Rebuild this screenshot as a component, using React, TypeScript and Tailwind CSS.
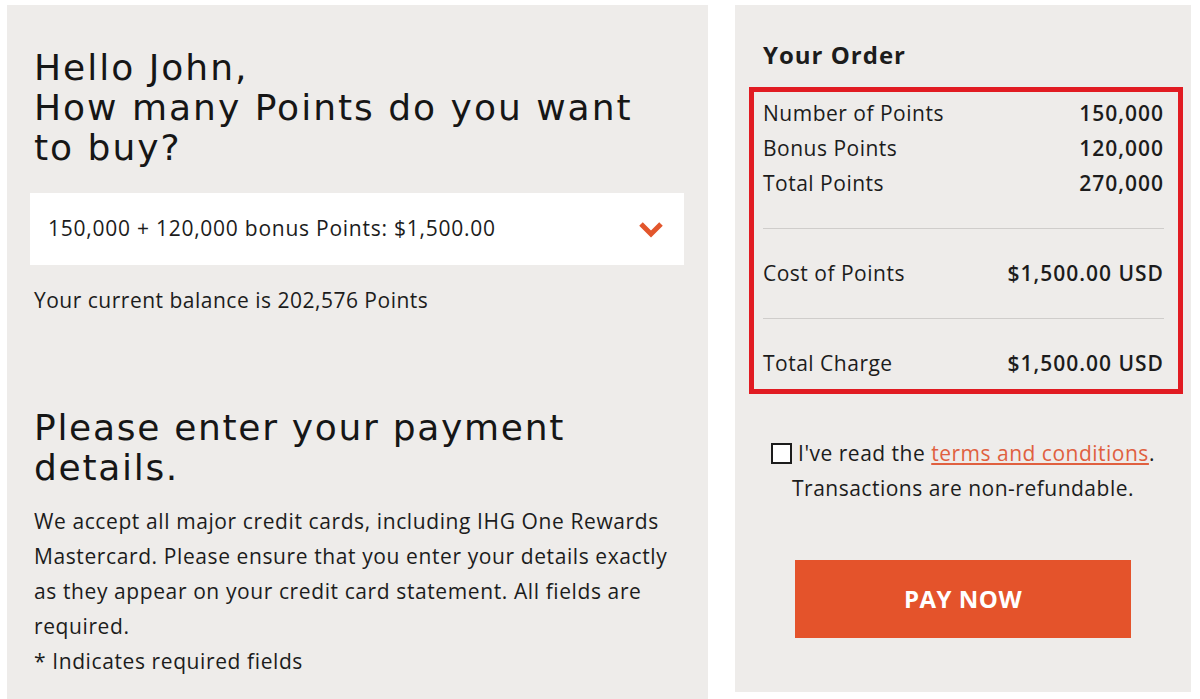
import React from "react";

const heading = { fontFamily: '"DejaVu Sans", sans-serif' };
const body = { fontFamily: '"Open Sans", sans-serif' };

function Row({ label, value }: { label: string; value: string }) {
  return (
    <div className="flex justify-between items-center h-[35px]">
      <span>{label}</span>
      <span className="font-semibold tracking-[1px]">{value}</span>
    </div>
  );
}

export default function App() {
  return (
    <div className="w-[1200px] h-[699px] bg-white flex text-[#1c1c1c] overflow-hidden tracking-[0.5px]" style={body}>
      <div className="ml-[7px] mt-[5px] w-[701px] h-[694px] bg-[#eeecea] pl-[23px] pr-[24px] pt-[43px]">
        <h1 className="pl-[4px] text-[36px] leading-[40px] font-normal tracking-[2px] text-[#161616]" style={heading}>
          Hello John,
          <br />
          How many Points do you want to buy?
        </h1>
        <div className="mt-[25px] h-[72px] bg-white flex items-center justify-between pl-[18px] pr-[20px] text-[21px] tracking-[0.75px]">
          <span>150,000 + 120,000 bonus Points: $1,500.00</span>
          <svg width="26" height="18" viewBox="0 0 26 18">
            <path d="M3 4 L13 14 L23 4" fill="none" stroke="#e2562c" strokeWidth="5" strokeLinecap="butt" strokeLinejoin="miter" />
          </svg>
        </div>
        <p className="pl-[4px] mt-[20px] text-[21px] leading-[30px]">Your current balance is 202,576 Points</p>
        <h2 className="pl-[4px] mt-[93px] text-[36px] leading-[40px] font-normal tracking-[1.7px] text-[#161616]" style={heading}>
          Please enter your payment details.
        </h2>
        <p className="pl-[4px] mt-[16px] text-[21px] leading-[35px] tracking-[0.6px]">
          We accept all major credit cards, including IHG One Rewards Mastercard. Please ensure that you enter your details exactly as they appear on your credit card statement. All fields are required.
        </p>
        <p className="pl-[4px] text-[21px] leading-[35px] tracking-[0.6px]">* Indicates required fields</p>
      </div>

      <div className="ml-[27px] mt-[5px] w-[456px] h-[687px] bg-[#eeecea] pt-[35px] pl-[14px] pr-[8px]">
        <h3 className="pl-[14px] text-[24px] leading-[30px] font-bold tracking-[1px]">Your Order</h3>
        <div className="mt-[17px] border-[5px] border-[#e11b22] pl-[9px] pr-[14px] pt-[4px] pb-[8px] text-[21px]">
          <Row label="Number of Points" value="150,000" />
          <Row label="Bonus Points" value="120,000" />
          <Row label="Total Points" value="270,000" />
          <div className="h-px bg-[#cfcdcb] mt-[27px]" />
          <div className="pt-[27px]">
            <Row label="Cost of Points" value="$1,500.00 USD" />
          </div>
          <div className="h-px bg-[#cfcdcb] mt-[27px]" />
          <div className="pt-[27px]">
            <Row label="Total Charge" value="$1,500.00 USD" />
          </div>
        </div>
        <div className="mt-[42px] text-center text-[21px] leading-[35px] pr-[6px]">
          <div className="flex items-center justify-center gap-[6px]">
            <span className="inline-block w-[21px] h-[21px] border-2 border-[#1c1c1c] bg-white" />
            <span>
              I've read the <a className="text-[#e0603f] underline underline-offset-2">terms and conditions</a>.
            </span>
          </div>
          <div>Transactions are non-refundable.</div>
        </div>
        <div className="mt-[54px] flex justify-center pr-[6px]">
          <button className="w-[336px] h-[78px] bg-[#e4532b] text-white text-[24px] font-bold tracking-[0.5px]">PAY NOW</button>
        </div>
      </div>
    </div>
  );
}
